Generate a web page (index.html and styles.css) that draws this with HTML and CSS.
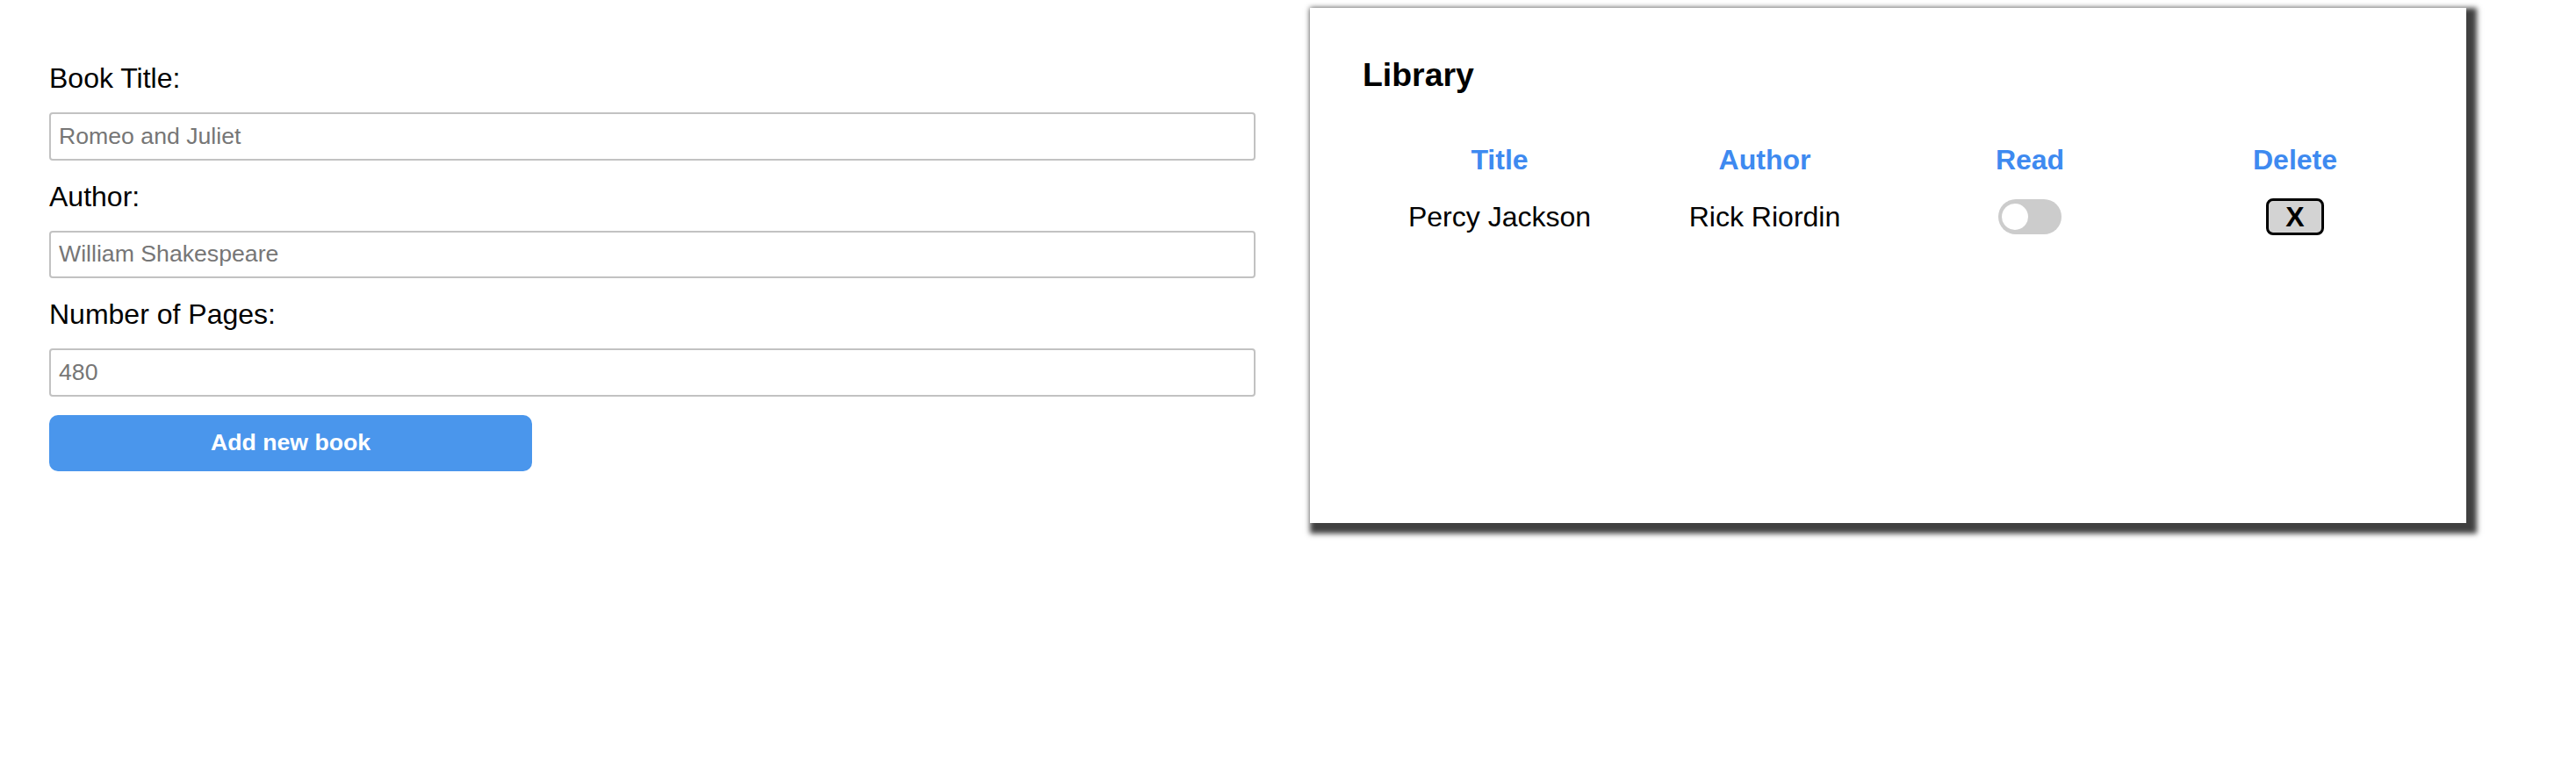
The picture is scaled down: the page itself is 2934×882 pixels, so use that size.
FILE: index.html
```html
<!DOCTYPE html>
<html lang="en">
<head>
<meta charset="utf-8">
<title>Library</title>
<link rel="stylesheet" href="styles.css">
</head>
<body>
<div class="page">
  <form class="book-form">
    <div class="field-group">
      <label class="field-label" for="title">Book Title:</label>
      <input class="field-input" id="title" type="text" placeholder="Romeo and Juliet">
    </div>
    <div class="field-group">
      <label class="field-label" for="author">Author:</label>
      <input class="field-input" id="author" type="text" placeholder="William Shakespeare">
    </div>
    <div class="field-group">
      <label class="field-label" for="pages">Number of Pages:</label>
      <input class="field-input" id="pages" type="text" placeholder="480">
    </div>
    <button class="add-btn" type="button">Add new book</button>
  </form>

  <section class="library-card">
    <h3 class="library-title">Library</h3>
    <div class="library-grid">
      <div class="col-head">Title</div>
      <div class="col-head">Author</div>
      <div class="col-head">Read</div>
      <div class="col-head">Delete</div>

      <div class="cell">Percy Jackson</div>
      <div class="cell">Rick Riordin</div>
      <div class="cell"><span class="toggle"><span class="knob"></span></span></div>
      <div class="cell"><button class="delete-btn" type="button">X</button></div>
    </div>
  </section>
</div>
</body>
</html>
```

FILE: styles.css
```css
* {
  box-sizing: border-box;
}

html, body {
  margin: 0;
  padding: 0;
  background: #ffffff;
  min-height: 100%;
}

body {
  font-family: "Liberation Sans", Arial, sans-serif;
  color: #000;
  min-height: 882px;
}

.page {
  display: flex;
  align-items: flex-start;
  padding: 9px 0 60px 56px;
  gap: 62px;
}

.book-form {
  width: 1374px;
  margin-top: 62px;
  display: flex;
  flex-direction: column;
  align-items: flex-start;
  gap: 23px;
}

.field-group {
  width: 100%;
  display: flex;
  flex-direction: column;
  gap: 21px;
}

.field-label {
  display: block;
  font-size: 32px;
  line-height: 36px;
}

.field-input {
  width: 100%;
  height: 54.5px;
  border: 2px solid #c2c2c2;
  border-radius: 4px;
  padding: 0 9px;
  font-family: "Liberation Sans", Arial, sans-serif;
  font-size: 26.67px;
  color: #000;
  background: #fff;
  outline: none;
}

.field-input::placeholder {
  color: #767676;
}

.add-btn {
  margin-top: -2px;
  width: 550px;
  height: 64px;
  border: none;
  border-radius: 10px;
  background: #4a96ec;
  color: #fff;
  font-family: "Liberation Sans", Arial, sans-serif;
  font-size: 26.67px;
  font-weight: bold;
}

.library-card {
  flex: none;
  width: 1317px;
  height: 587px;
  background: #fff;
  padding: 55px 40px 0 60px;
  box-shadow: 6px 6px 6px 6px #404040;
}

.library-title {
  margin: 0;
  font-size: 37.44px;
  line-height: 42px;
  font-weight: bold;
}

.library-grid {
  margin: 56px 0 0 7px;
  display: grid;
  grid-template-columns: repeat(4, 298px);
  grid-template-rows: 40px 42px;
  column-gap: 4px;
  row-gap: 24px;
}

.col-head {
  text-align: center;
  font-size: 32px;
  line-height: 40px;
  font-weight: bold;
  color: #3e8af0;
}

.cell {
  display: flex;
  align-items: center;
  justify-content: center;
  font-size: 32px;
  line-height: 42px;
}

.toggle {
  width: 72px;
  height: 40px;
  border-radius: 20px;
  background: #cccccc;
  display: flex;
  align-items: center;
  padding-left: 4px;
}

.knob {
  width: 30px;
  height: 30px;
  border-radius: 50%;
  background: #fff;
}

.delete-btn {
  width: 66px;
  height: 42px;
  padding: 0;
  border: 3px solid #000;
  border-radius: 8px;
  background: #d3d3d3;
  color: #000;
  font-family: "Liberation Sans", Arial, sans-serif;
  font-size: 32px;
  font-weight: bold;
  line-height: 1;
}
```
